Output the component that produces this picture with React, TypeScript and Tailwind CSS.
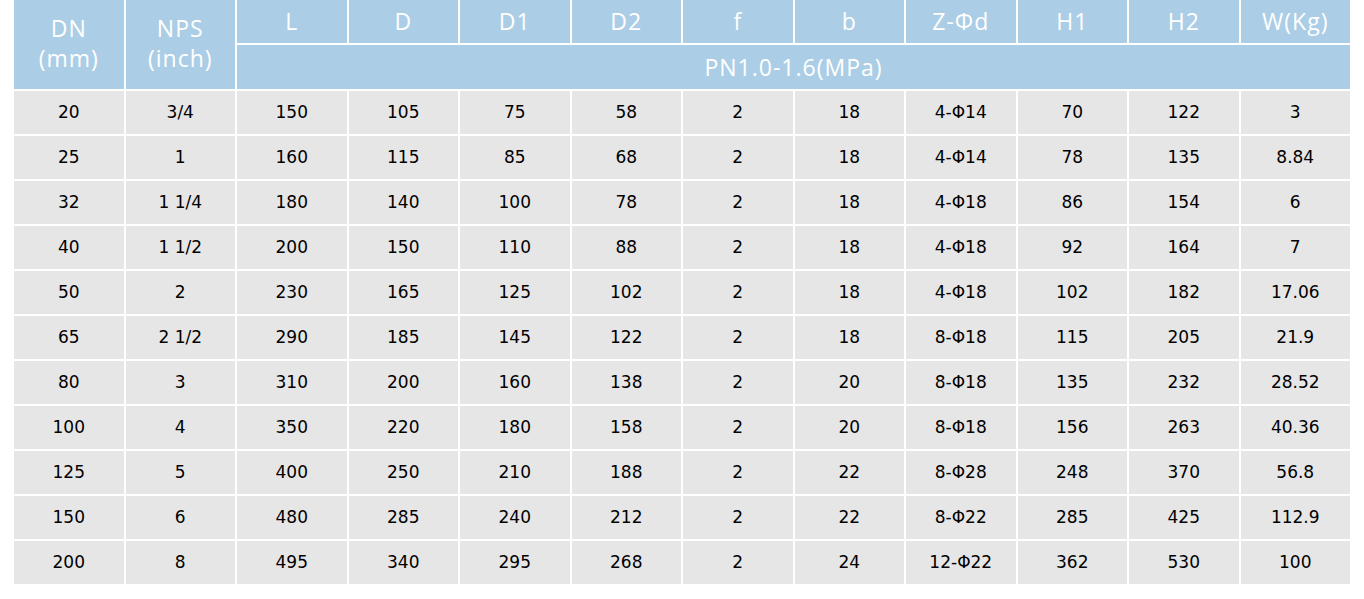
// Valve dimension table, PN1.0-1.6 rating.

const cols = ['L', 'D', 'D1', 'D2', 'f', 'b', 'Z-Φd', 'H1', 'H2', 'W(Kg)']

const rows: string[][] = [
  ['20', '3/4', '150', '105', '75', '58', '2', '18', '4-Φ14', '70', '122', '3'],
  ['25', '1', '160', '115', '85', '68', '2', '18', '4-Φ14', '78', '135', '8.84'],
  ['32', '1 1/4', '180', '140', '100', '78', '2', '18', '4-Φ18', '86', '154', '6'],
  ['40', '1 1/2', '200', '150', '110', '88', '2', '18', '4-Φ18', '92', '164', '7'],
  ['50', '2', '230', '165', '125', '102', '2', '18', '4-Φ18', '102', '182', '17.06'],
  ['65', '2 1/2', '290', '185', '145', '122', '2', '18', '8-Φ18', '115', '205', '21.9'],
  ['80', '3', '310', '200', '160', '138', '2', '20', '8-Φ18', '135', '232', '28.52'],
  ['100', '4', '350', '220', '180', '158', '2', '20', '8-Φ18', '156', '263', '40.36'],
  ['125', '5', '400', '250', '210', '188', '2', '22', '8-Φ28', '248', '370', '56.8'],
  ['150', '6', '480', '285', '240', '212', '2', '22', '8-Φ22', '285', '425', '112.9'],
  ['200', '8', '495', '340', '295', '268', '2', '24', '12-Φ22', '362', '530', '100'],
]

export default function App() {
  return (
    <div className="min-h-screen bg-white pl-[12px]">
      <table className="w-[1340px] table-fixed border-collapse text-center">
        <thead className="bg-[#abcee6] text-white font-['Open_Sans',sans-serif] text-[23px] tracking-[1px]">
          <tr className="h-[44px]">
            <th rowSpan={2} className="border-2 border-t-0 border-white pb-1 font-normal leading-[30px]">
              DN<br />(mm)
            </th>
            <th rowSpan={2} className="border-2 border-t-0 border-white pb-1 font-normal leading-[30px]">
              NPS<br />(inch)
            </th>
            {cols.map((c) => (
              <th key={c} className="border-2 border-t-0 border-white font-normal">
                {c}
              </th>
            ))}
          </tr>
          <tr className="h-[46px]">
            <th colSpan={10} className="border-2 border-white font-normal">
              PN1.0-1.6(MPa)
            </th>
          </tr>
        </thead>
        <tbody className="bg-[#e6e6e6] text-black font-['DejaVu_Sans',sans-serif] text-[17px]">
          {rows.map((r) => (
            <tr key={r[0]} className="h-[45px]">
              {r.map((v, i) => (
                <td key={i} className="border-2 border-white">
                  {v}
                </td>
              ))}
            </tr>
          ))}
        </tbody>
      </table>
    </div>
  )
}
